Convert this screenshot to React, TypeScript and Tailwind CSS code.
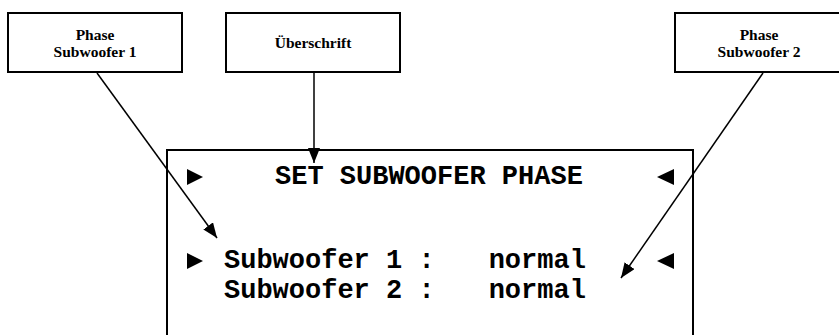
function TriRight() {
  return (
    <svg width="16" height="16" viewBox="0 0 16 16" className="shrink-0">
      <polygon points="0,0 16,8 0,16" fill="black" />
    </svg>
  );
}

function TriLeft() {
  return (
    <svg width="17" height="16" viewBox="0 0 17 16" className="shrink-0">
      <polygon points="17,0 0,8 17,16" fill="black" />
    </svg>
  );
}

function Label({ lines, className }: { lines: string[]; className: string }) {
  return (
    <div
      className={`flex h-[61px] shrink-0 flex-col items-center justify-center border-2 border-black bg-white text-center font-['Liberation_Serif',serif] text-[15.5px] font-bold leading-[17px] text-black ${className}`}
    >
      {lines.map((l) => (
        <span key={l}>{l}</span>
      ))}
    </div>
  );
}

export default function App() {
  return (
    <div className="relative h-[335px] w-[839px] overflow-hidden bg-white">
      {/* callout labels */}
      <div className="flex items-start pt-[12px]">
        <Label lines={["Phase", "Subwoofer 1"]} className="ml-[7px] w-[176px]" />
        <Label lines={["Überschrift"]} className="ml-[42px] w-[176px]" />
        <Label lines={["Phase", "Subwoofer 2"]} className="ml-[273px] w-[170px]" />
      </div>

      {/* display */}
      <div className="ml-[166px] mt-[76px] h-[200px] w-[528px] border-2 border-b-0 border-black pt-[11px] font-['Liberation_Mono',monospace] text-[27px] font-bold leading-[30px] text-black">
        <div className="flex h-[30px] items-center pl-[19px]">
          <TriRight />
          <span className="ml-[72px] whitespace-pre">SET SUBWOOFER PHASE</span>
          <span className="ml-[74px]">
            <TriLeft />
          </span>
        </div>

        <div className="mt-[54px] flex h-[30px] items-center pl-[19px]">
          <TriRight />
          <span className="ml-[21px] whitespace-pre">Subwoofer 1 :</span>
          <span className="ml-[54px]">normal</span>
          <span className="ml-[71px]">
            <TriLeft />
          </span>
        </div>

        <div className="flex h-[30px] items-center pl-[56px]">
          <span className="whitespace-pre">Subwoofer 2 :</span>
          <span className="ml-[54px]">normal</span>
        </div>
      </div>

      {/* pointer lines */}
      <svg className="pointer-events-none absolute inset-0" width="839" height="335">
        <defs>
          <marker
            id="head"
            markerUnits="userSpaceOnUse"
            markerWidth="16"
            markerHeight="12"
            refX="15"
            refY="6"
            orient="auto"
          >
            <path d="M0,0 L15,6 L0,12 z" fill="black" />
          </marker>
        </defs>
        <line x1="97" y1="73" x2="217" y2="238" stroke="black" strokeWidth="1.5" markerEnd="url(#head)" />
        <line x1="314" y1="73" x2="314" y2="163" stroke="black" strokeWidth="1.5" markerEnd="url(#head)" />
        <line x1="763" y1="73" x2="621" y2="278" stroke="black" strokeWidth="1.5" markerEnd="url(#head)" />
      </svg>
    </div>
  );
}
